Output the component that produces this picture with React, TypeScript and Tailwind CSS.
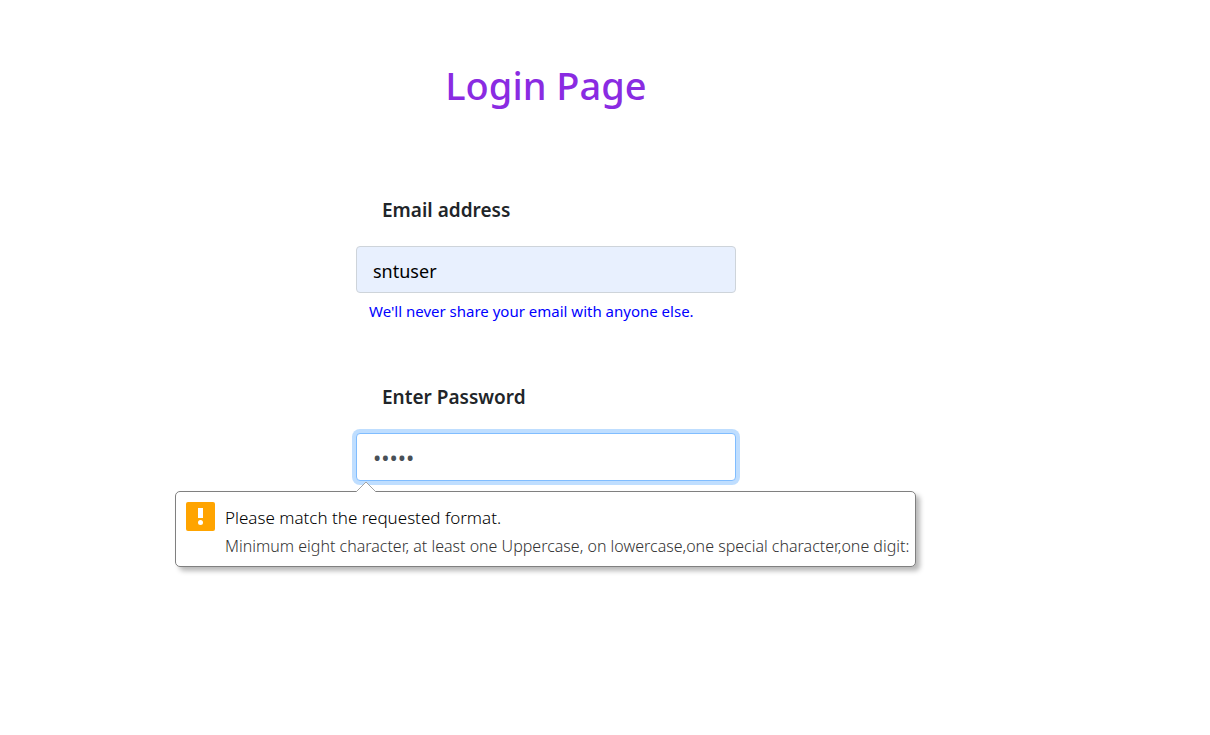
import { useState } from 'react';

function ValidationBubble({ title, detail }: { title: string; detail: string }) {
  return (
    <div
      id="password-error"
      role="alert"
      className="absolute top-full -left-[181px] mt-[10px] flex w-[741px] gap-[10px] rounded-[5px] border border-[#808080] bg-white p-[10px] shadow-[4px_4px_5px_rgba(0,0,0,0.28)]"
    >
      <svg
        className="absolute -top-[11px] left-[179px]"
        width="22"
        height="12"
        viewBox="0 0 22 12"
        aria-hidden="true"
      >
        <path d="M1 11 11 1 21 11V12H1Z" fill="#fff" />
        <path d="M1 11 11 1 21 11" fill="none" stroke="#a3a3a3" strokeWidth="1" />
      </svg>
      <svg className="shrink-0" width="29" height="29" viewBox="0 0 29 29" aria-hidden="true">
        <rect width="29" height="29" rx="2" fill="#ffa400" />
        <path d="M12 6h5v10h-5z" fill="#fff" />
        <circle cx="14.5" cy="20.5" r="2.5" fill="#fff" />
      </svg>
      <div className="pt-[2px] whitespace-nowrap">
        <p className="text-[17px] leading-[28px] font-light text-black">{title}</p>
        <p className="-mb-1 text-[16px] leading-[28px] font-light text-[#333]">{detail}</p>
      </div>
    </div>
  );
}

export default function App() {
  const [email, setEmail] = useState('sntuser');
  const [password, setPassword] = useState('admin');

  return (
    <main className="flex min-h-screen flex-col items-center bg-white pt-14 pr-[118px] font-['Segoe_UI','Noto_Sans',sans-serif] text-[#212529]">
      <h1 className="text-[38px] leading-[58px] font-medium text-[#8a2be2]">Login Page</h1>

      <form className="mt-[82px] w-full max-w-[380px]" onSubmit={(event) => event.preventDefault()}>
        <div>
          <label htmlFor="email" className="block pl-[26px] text-[19px] leading-[28px] font-semibold">
            Email address
          </label>
          <input
            id="email"
            type="text"
            value={email}
            onChange={(event) => setEmail(event.target.value)}
            aria-describedby="email-help"
            className="mt-[22px] block h-[47px] w-full rounded-[4px] border border-[#ced4da] bg-[#e8f0fe] px-4 pt-[3px] text-[18px] text-black outline-none"
          />
          <p id="email-help" className="mt-[6px] pl-[13px] text-[15px] leading-[24px] text-[#0000ff]">
            We'll never share your email with anyone else.
          </p>
        </div>

        <div className="relative mt-[60px]">
          <label htmlFor="password" className="block pl-[26px] text-[19px] leading-[28px] font-semibold">
            Enter Password
          </label>
          <input
            id="password"
            type="password"
            value={password}
            onChange={(event) => setPassword(event.target.value)}
            aria-invalid="true"
            aria-describedby="password-error"
            className="mt-[22px] block h-[48px] w-full rounded-[4px] border border-[#80bdff] bg-white px-4 text-[22px] text-[#495057] shadow-[0_0_0_4px_#bfdeff] outline-none"
          />
          <ValidationBubble
            title="Please match the requested format."
            detail="Minimum eight character, at least one Uppercase, on lowercase,one special character,one digit:"
          />
        </div>
      </form>
    </main>
  );
}
